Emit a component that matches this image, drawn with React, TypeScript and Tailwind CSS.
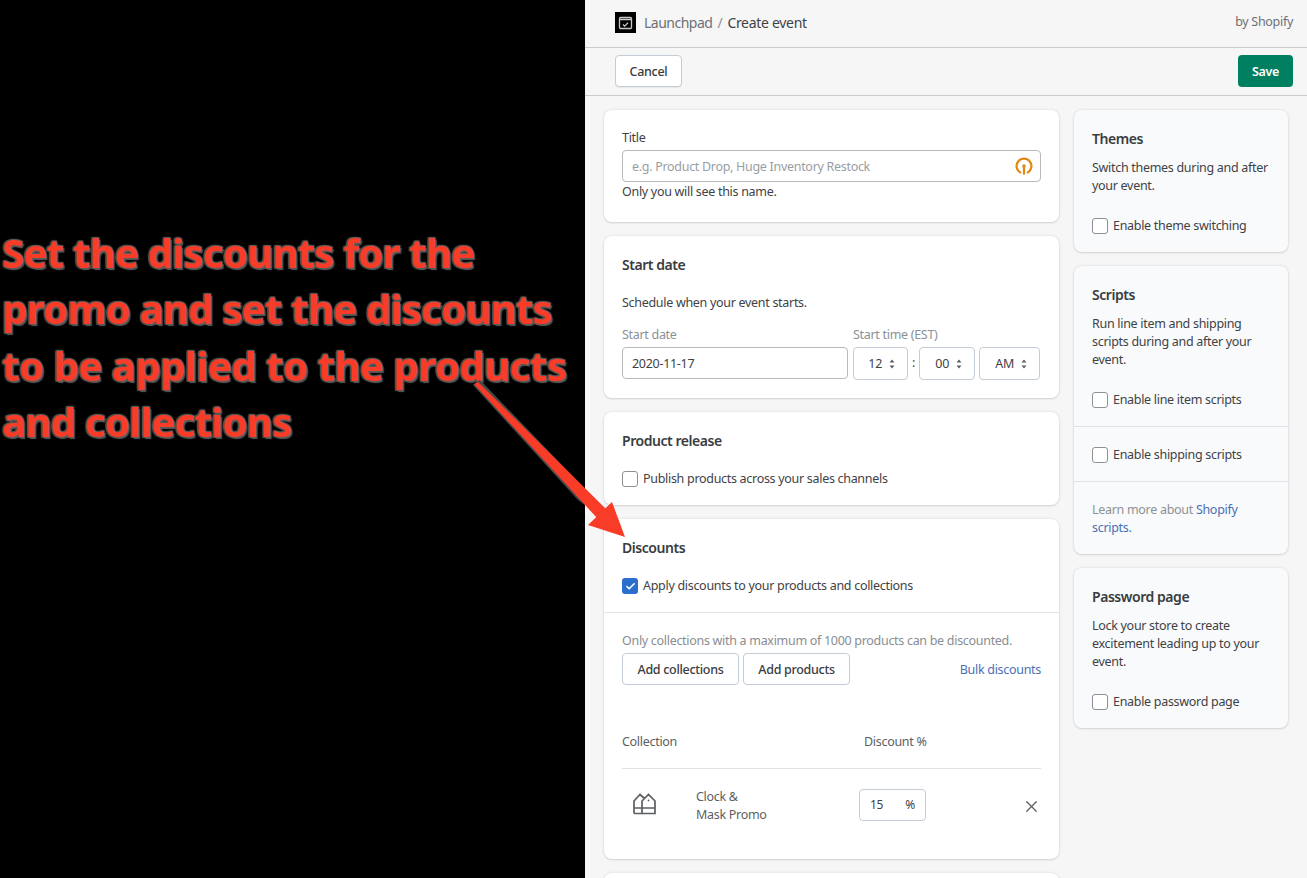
import { Check, X } from 'lucide-react';

const font = "[font-family:'Noto_Sans','Liberation_Sans',sans-serif]";

function Checkbox({ label, checked = false }: { label: string; checked?: boolean }) {
  return (
    <div className="flex items-center gap-[5px]">
      {checked ? (
        <span className="flex h-4 w-4 items-center justify-center rounded-[3px] bg-[#2c6ecb]">
          <Check size={11} strokeWidth={3.5} className="text-white" />
        </span>
      ) : (
        <span className="h-4 w-4 rounded-[3px] border border-[#8c9196] bg-white" />
      )}
      <span className="text-[12.5px] leading-[18px] text-[#3f4245]">{label}</span>
    </div>
  );
}

function Stepper({ value, width }: { value: string; width: string }) {
  return (
    <div className={`flex h-[33px] items-center justify-end gap-[7px] rounded-[4px] border border-[#c4cdd5] bg-white pr-[12px] text-[12.5px] text-[#3f4245] ${width}`}>
      <span className="pt-[1px]">{value}</span>
      <svg width="6" height="10" viewBox="0 0 6 10" className="text-[#5c5f62]">
        <path d="M3 0.5 5.5 3.5H.5zM3 9.5 .5 6.5h5z" fill="currentColor" />
      </svg>
    </div>
  );
}

function SideCard({ title, text, children }: { title: string; text: string; children: React.ReactNode }) {
  return (
    <section className="rounded-[8px] bg-[#f9fafb] pt-[20px] pr-[14px] pb-[17px] pl-[18px] shadow-[0_0_3px_rgba(23,24,24,0.12),0_1px_2px_rgba(0,0,0,0.1)]">
      <h2 className="text-[14px] leading-[18px] font-semibold tracking-[-0.45px] text-[#3a3c3f]">{title}</h2>
      <p className="mt-[11px] text-[12.5px] leading-[18px] text-[#3f4245]">{text}</p>
      <div className="mt-[22px]">{children}</div>
    </section>
  );
}

export default function App() {
  return (
    <div className={`flex h-[878px] w-[1307px] overflow-hidden bg-black ${font}`}>
      <aside className="relative w-[585px] shrink-0 pt-[225px] pl-[2px]">
        <h1 className="text-[40px] leading-[56.3px] font-bold tracking-[-0.72px] whitespace-nowrap text-[#f83c28] [text-shadow:2px_2px_1px_#5a5a5a,-1px_-1px_1px_#5a5a5a,1px_-1px_1px_#5a5a5a,-1px_1px_1px_#5a5a5a]">
          Set the discounts for the
          <br />
          promo and set the discounts
          <br />
          <span className="tracking-[-0.45px]">to be applied to the products</span>
          <br />
          and collections
        </h1>
      </aside>

      <main className="flex-1 bg-[#f6f6f7] tracking-[-0.3px]">
        <header className="flex h-[48px] items-center justify-between border-b border-[#c9cccf] pr-[14px] pl-[30px]">
          <div className="-mt-[3px] flex items-center text-[14px]">
            <span className="flex h-[21px] w-[21px] items-center justify-center bg-black">
              <svg width="15" height="15" viewBox="0 0 15 15" fill="none" stroke="#c9c9c9" strokeWidth="1.3">
                <rect x="1.5" y="2.5" width="12" height="11" rx="1" />
                <path d="M1.5 4.5h12M5 9.5l1.7 1.6L10 7.8" />
              </svg>
            </span>
            <span className="ml-[8px] tracking-[-0.5px] text-[#6d7175]">Launchpad</span>
            <span className="ml-[5px] text-[#8c9196]">/</span>
            <span className="ml-[5px] text-[#3f4245]">Create event</span>
          </div>
          <span className="-mt-[3px] text-[12.5px] text-[#6d7175]">by Shopify</span>
        </header>

        <div className="flex h-[48px] items-center justify-between border-b border-[#c9cccf] pr-[14px] pl-[30px]">
          <button className="-mt-[1px] h-[32px] w-[67px] rounded-[4px] border border-[#c4cdd5] bg-white pt-[2px] text-[12.5px] font-medium text-[#3a3c3f] shadow-[0_1px_0_rgba(0,0,0,0.05)]">
            Cancel
          </button>
          <button className="-mt-[1px] h-[32px] w-[55px] rounded-[4px] bg-[#008060] pt-[2px] text-[12.5px] font-semibold text-white">
            Save
          </button>
        </div>

        <div className="flex gap-[15px] pt-[14px] pl-[19px]">
          <div className="flex w-[455px] shrink-0 flex-col gap-[14px]">
            <section className="h-[112px] rounded-[8px] bg-white px-[18px] pt-[19px] shadow-[0_0_3px_rgba(23,24,24,0.12),0_1px_2px_rgba(0,0,0,0.1)]">
              <label className="block text-[12.5px] leading-[18px] text-[#3f4245]">Title</label>
              <div className="mt-[3px] flex h-[32px] items-center justify-between rounded-[4px] border border-[#b5babf] pr-[6px] pl-[9px]">
                <span className="pt-[2px] text-[12.5px] text-[#999ea3]">e.g. Product Drop, Huge Inventory Restock</span>
                <svg width="20" height="20" viewBox="0 0 18 18" fill="none" stroke="#e08a14" strokeWidth="2" strokeLinecap="round">
                  <path d="M5.6 14.8A6.7 6.7 0 1 1 12.4 14.8" />
                  <path d="M9 16V9.5" />
                  <circle cx="9" cy="9" r="1.6" fill="#e08a14" stroke="none" />
                </svg>
              </div>
              <p className="mt-[1px] text-[12.5px] leading-[18px] text-[#3f4245]">Only you will see this name.</p>
            </section>

            <section className="h-[162px] rounded-[8px] bg-white px-[18px] pt-[20px] shadow-[0_0_3px_rgba(23,24,24,0.12),0_1px_2px_rgba(0,0,0,0.1)]">
              <h2 className="text-[14px] leading-[18px] font-semibold tracking-[-0.45px] text-[#3a3c3f]">Start date</h2>
              <p className="mt-[20px] text-[12.5px] leading-[18px] text-[#3f4245]">Schedule when your event starts.</p>
              <div className="mt-[14px] flex">
                <div className="w-[231px] shrink-0">
                  <div className="text-[12.5px] leading-[18px] text-[#8c9196]">Start date</div>
                  <div className="mt-[3px] flex h-[32px] w-[226px] items-center rounded-[4px] border border-[#b5babf] pt-[2px] pl-[9px] text-[12.5px] text-[#3f4245]">
                    2020-11-17
                  </div>
                </div>
                <div>
                  <div className="text-[12.5px] leading-[18px] text-[#8c9196]">Start time (EST)</div>
                  <div className="mt-[3px] flex items-center">
                    <Stepper value="12" width="w-[55px]" />
                    <span className="w-[11px] text-center text-[12.5px] text-[#3f4245]">:</span>
                    <Stepper value="00" width="w-[56px]" />
                    <span className="w-[4px]" />
                    <Stepper value="AM" width="w-[61px]" />
                  </div>
                </div>
              </div>
            </section>

            <section className="h-[93px] rounded-[8px] bg-white px-[18px] pt-[20px] shadow-[0_0_3px_rgba(23,24,24,0.12),0_1px_2px_rgba(0,0,0,0.1)]">
              <h2 className="text-[14px] leading-[18px] font-semibold tracking-[-0.45px] text-[#3a3c3f]">Product release</h2>
              <div className="mt-[20px]">
                <Checkbox label="Publish products across your sales channels" />
              </div>
            </section>

            <section className="h-[340px] rounded-[8px] bg-white pt-[20px] shadow-[0_0_3px_rgba(23,24,24,0.12),0_1px_2px_rgba(0,0,0,0.1)]">
              <div className="border-b border-[#dfe3e8] px-[18px] pb-[17px]">
                <h2 className="text-[14px] leading-[18px] font-semibold tracking-[-0.45px] text-[#3a3c3f]">Discounts</h2>
                <div className="mt-[20px]">
                  <Checkbox label="Apply discounts to your products and collections" checked />
                </div>
              </div>
              <div className="px-[18px] pt-[19px]">
                <p className="text-[12.5px] leading-[18px] text-[#8a8d91]">
                  Only collections with a maximum of 1000 products can be discounted.
                </p>
                <div className="mt-[3px] flex items-center gap-[4px]">
                  <button className="h-[32px] w-[117px] rounded-[4px] border border-[#c4cdd5] bg-white pt-[2px] text-[12.5px] font-medium text-[#3a3c3f]">
                    Add collections
                  </button>
                  <button className="h-[32px] w-[107px] rounded-[4px] border border-[#c4cdd5] bg-white pt-[2px] text-[12.5px] font-medium text-[#3a3c3f]">
                    Add products
                  </button>
                  <span className="ml-auto pt-[2px] text-[12.5px] text-[#4b6fb5]">Bulk discounts</span>
                </div>
                <div className="mt-[48px] flex border-b border-[#dfe3e8] pb-[17px] text-[12.5px] leading-[18px] text-[#5c5f62]">
                  <span className="w-[242px]">Collection</span>
                  <span>Discount %</span>
                </div>
                <div className="mt-[19px] flex items-center">
                  <span className="mb-[5px] flex w-[74px] shrink-0 pl-[11px]">
                    <svg width="23" height="22" viewBox="0 0 23 22" fill="none" stroke="#5c5f62" strokeWidth="1.7">
                      <path d="M9 20.5V8L15.5 1.5 22 8V20.5zM1 20.5V8L7 1.5 11.5 5.5M1 15h21M1 20.5h8" />
                      <circle cx="15.5" cy="7.5" r="0.9" fill="#5c5f62" stroke="none" />
                    </svg>
                  </span>
                  <span className="w-[163px] shrink-0 text-[12.5px] leading-[18px] text-[#5c5f62]">
                    Clock &amp;
                    <br />
                    Mask Promo
                  </span>
                  <div className="mb-[3px] flex h-[32px] w-[67px] shrink-0 items-center justify-between rounded-[4px] border border-[#c4cdd5] px-[10px] text-[12px] text-[#3f4245]">
                    <span>15</span>
                    <span>%</span>
                  </div>
                  <X size={19} strokeWidth={1.6} className="ml-auto text-[#5c5f62]" />
                </div>
              </div>
            </section>

            <section className="h-[40px] rounded-[8px] bg-white shadow-[0_0_3px_rgba(23,24,24,0.12),0_1px_2px_rgba(0,0,0,0.1)]" />
          </div>

          <div className="flex w-[214px] shrink-0 flex-col gap-[14px]">
            <SideCard title="Themes" text="Switch themes during and after your event.">
              <Checkbox label="Enable theme switching" />
            </SideCard>

            <section className="rounded-[8px] bg-[#f9fafb] shadow-[0_0_3px_rgba(23,24,24,0.12),0_1px_2px_rgba(0,0,0,0.1)]">
              <div className="border-b border-[#dfe3e8] pt-[20px] pr-[14px] pb-[17px] pl-[18px]">
                <h2 className="text-[14px] leading-[18px] font-semibold tracking-[-0.45px] text-[#3a3c3f]">Scripts</h2>
                <p className="mt-[11px] text-[12.5px] leading-[18px] text-[#3f4245]">
                  Run line item and shipping scripts during and after your event.
                </p>
                <div className="mt-[22px]">
                  <Checkbox label="Enable line item scripts" />
                </div>
              </div>
              <div className="border-b border-[#dfe3e8] pt-[19px] pb-[17px] pl-[18px]">
                <Checkbox label="Enable shipping scripts" />
              </div>
              <p className="pt-[19px] pr-[14px] pb-[17px] pl-[18px] text-[12.5px] leading-[18px] text-[#8c9196]">
                <span>Learn more about </span>
                <span className="text-[#4b6fb5]">Shopify</span>
                <br />
                <span className="text-[#4b6fb5]">scripts.</span>
              </p>
            </section>

            <SideCard title="Password page" text="Lock your store to create excitement leading up to your event.">
              <Checkbox label="Enable password page" />
            </SideCard>
          </div>
        </div>
      </main>

      <svg className="pointer-events-none absolute top-0 left-0" width="1307" height="878" viewBox="0 0 1307 878">
        <path d="M473 385 L480 380 L585 489 L585 505 L578 500 Z" fill="#4a4a4a" />
        <path d="M474 384 L478 382 L606 509 L597 518 Z" fill="#f83c28" />
        <path d="M625 537 L588 525 L612 502 Z" fill="#f83c28" />
      </svg>
    </div>
  );
}
